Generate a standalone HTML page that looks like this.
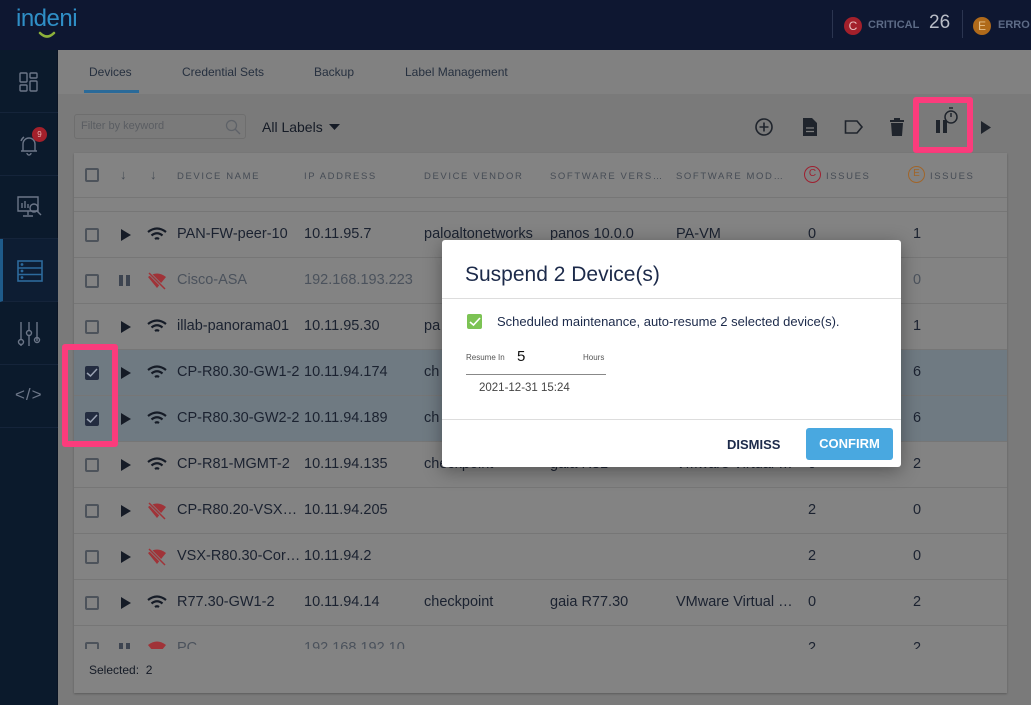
<!DOCTYPE html>
<html><head><meta charset="utf-8"><style>
*{box-sizing:border-box;margin:0;padding:0}
body{width:1031px;height:705px;overflow:hidden;position:relative;background:#7a7a7a;font-family:"Liberation Sans",sans-serif;color:#1b2433}
.a{position:absolute}
.hdr{left:0;top:0;width:1031px;height:50px;background:#0e1731}
.side{left:0;top:50px;width:58px;height:655px;background:#0b1a2c;border-right:1px solid #0a1424}
.si{position:absolute;left:0;width:58px;height:63px;border-bottom:1px solid #15243a}
.tabs{left:58px;top:50px;width:973px;height:44px;background:#818181}
.tab{position:absolute;top:15px;font-size:12px;color:#26303f}
.panel{left:74px;top:153px;width:933px;height:540px;background:#838383;box-shadow:0 1px 2px rgba(0,0,0,.25)}
.th{position:absolute;top:18px;font-size:9.5px;letter-spacing:1.6px;color:#464c55}
.row{position:absolute;left:0;width:933px;height:46px;border-top:1px solid #767676}
.c{position:absolute;top:14px;font-size:14.5px;color:#1b2230;white-space:nowrap}
.cb{position:absolute;left:11px;top:16px;width:14px;height:14px;border:2px solid #4d535b;border-radius:2px}
.cb.on{background:#232c40;border-color:#232c40}
.pink{border:6px solid #fb3c7c;border-radius:3px}
.dlg{left:442px;top:240px;width:459px;height:227px;background:#fff;border-radius:3px;box-shadow:0 4px 18px rgba(0,0,0,.35)}
</style></head><body>
<div class="a hdr">
 <div class="a" style="left:16px;top:5px;font-size:24px;color:#2f8fc6;letter-spacing:-0.5px">indeni</div>
 <svg class="a" style="left:38px;top:31px" width="18" height="8"><path d="M2 2 Q9 9 16 2" stroke="#8db13a" stroke-width="2.5" fill="none" stroke-linecap="round"/></svg>
 <div class="a" style="left:832px;top:10px;width:1px;height:28px;background:#2b3550"></div>
 <div class="a" style="left:844px;top:17px;width:18px;height:18px;border-radius:50%;background:#a3202b;color:#e8c0c0;font-size:12px;text-align:center;line-height:18px">C</div>
 <div class="a" style="left:868px;top:19px;font-size:11px;font-weight:bold;color:#5d6b86">CRITICAL</div>
 <div class="a" style="left:929px;top:12px;font-size:19px;color:#b8bcc6">26</div>
 <div class="a" style="left:962px;top:10px;width:1px;height:28px;background:#2b3550"></div>
 <div class="a" style="left:973px;top:17px;width:18px;height:18px;border-radius:50%;background:#b06a1a;color:#e6c08a;font-size:12px;text-align:center;line-height:18px">E</div>
 <div class="a" style="left:998px;top:19px;font-size:11px;font-weight:bold;color:#5d6b86">ERRO</div>
</div>
<div class="a side">
 <div class="si" style="top:0"><svg class="a" style="left:19px;top:22px" width="20" height="20" fill="none" stroke="#6c7688" stroke-width="1.4"><rect x="1" y="1" width="7" height="9" rx="1"/><rect x="1" y="13" width="7" height="6" rx="1"/><rect x="11" y="1" width="7" height="5" rx="1"/><rect x="11" y="9" width="7" height="10" rx="1"/></svg></div>
 <div class="si" style="top:63px"><svg class="a" style="left:18px;top:20px" width="24" height="24" fill="none" stroke="#6c7688" stroke-width="1.4"><path d="M5 18 V11 a6 6 0 0 1 12 0 V18 H3 H19 M9 20 a2 2 0 0 0 4 0 M3 8 a8 8 0 0 1 3-4"/></svg><div class="a" style="left:32px;top:14px;width:15px;height:15px;border-radius:50%;background:#a3202b;color:#e8b0b0;font-size:8px;text-align:center;line-height:15px">9</div></div>
 <div class="si" style="top:126px"><svg class="a" style="left:16px;top:18px" width="28" height="26" fill="none" stroke="#6c7688" stroke-width="1.4"><path d="M2 3 H22 V17 H2 Z M12 17 V21 M7 22 H17 M6 14 V9 M9 14 V7 M12 14 V10"/><circle cx="18" cy="14" r="4"/><path d="M21 17 L25 21"/></svg></div>
 <div class="si" style="top:189px;background:#0d1d33;border-left:3px solid #1e5b8a"><svg class="a" style="left:14px;top:21px" width="26" height="22" fill="none" stroke="#2c6a9c" stroke-width="1.6"><rect x="1" y="1" width="24" height="20"/><path d="M1 8 H25 M1 14.5 H25"/><circle cx="5" cy="4.5" r=".6" fill="#2c6a9c"/><circle cx="5" cy="11" r=".6" fill="#2c6a9c"/><circle cx="5" cy="17.5" r=".6" fill="#2c6a9c"/></svg></div>
 <div class="si" style="top:252px"><svg class="a" style="left:17px;top:18px" width="24" height="28" fill="none" stroke="#6c7688" stroke-width="1.4"><path d="M4 2 V19 M12 2 V10 M20 2 V21 M12 16 V26 M4 25 V26"/><circle cx="4" cy="22" r="2.5"/><circle cx="12" cy="13" r="2.5"/><circle cx="20" cy="20" r="2.5" transform="translate(0,0)"/></svg></div>
 <div class="si" style="top:315px"><div class="a" style="left:15px;top:20px;font-size:17px;color:#6c7688;letter-spacing:1px">&lt;/&gt;</div></div>
</div>
<div class="a tabs">
 <div class="tab" style="left:31px">Devices</div>
 <div class="a" style="left:26px;top:40px;width:55px;height:3px;background:#2a6a99"></div>
 <div class="tab" style="left:124px">Credential Sets</div>
 <div class="tab" style="left:256px">Backup</div>
 <div class="tab" style="left:347px">Label Management</div>
</div>
<div class="a" style="left:74px;top:114px;width:172px;height:25px;border:1px solid #6e6e6e;border-radius:3px">
 <div class="a" style="left:6px;top:5px;font-size:11px;color:#5a5d62">Filter by keyword</div>
 <svg class="a" style="left:150px;top:4px" width="16" height="16" fill="none" stroke="#5e6268" stroke-width="1.3"><circle cx="6.5" cy="6.5" r="5"/><path d="M10 10 L15 15"/></svg>
</div>
<div class="a" style="left:262px;top:119px;font-size:14px;color:#151b26">All Labels</div>
<svg class="a" style="left:329px;top:124px" width="12" height="7"><path d="M0 0 H11 L5.5 6 Z" fill="#151b26"/></svg>
<svg class="a" style="left:754px;top:117px" width="20" height="20" fill="none" stroke="#1f242c" stroke-width="1.6"><circle cx="10" cy="10" r="8"/><path d="M10 5.5 V14.5 M5.5 10 H14.5"/></svg>
<svg class="a" style="left:802px;top:117px" width="16" height="20"><path d="M1 1 H10 L15 6 V19 H1 Z" fill="#1f242c"/><path d="M4 11 H12 M4 14.5 H12" stroke="#7f7f7f" stroke-width="1.3"/></svg>
<svg class="a" style="left:844px;top:119px" width="20" height="16" fill="none" stroke="#1f242c" stroke-width="1.6"><path d="M1.5 2 H13 L18 8 L13 14 H1.5 Z"/></svg>
<svg class="a" style="left:889px;top:117px" width="16" height="20"><path d="M1 3 H15 V5 H1 Z M5 1 H11 V3 H5 Z M2 6 H14 L13 19 H3 Z" fill="#1f242c"/></svg>
<div class="a pink" style="left:913px;top:97px;width:60px;height:56px"></div>
<div class="a" style="left:936px;top:120px;width:4px;height:13px;background:#1f242c"></div>
<div class="a" style="left:943px;top:120px;width:4px;height:13px;background:#1f242c"></div>
<svg class="a" style="left:942px;top:106px" width="18" height="20" fill="none" stroke="#1f242c" stroke-width="1.5"><circle cx="9" cy="11" r="6"/><path d="M7 2 H11 M9 11 V7"/></svg>
<svg class="a" style="left:981px;top:121px" width="10" height="13"><path d="M0 0 L10 6.5 L0 13 Z" fill="#1f242c"/></svg>

<div class="a panel">
 <div class="cb" style="left:11px;top:15px"></div>
 <div class="th" style="left:46px;top:14px;font-size:13px;letter-spacing:0">↓</div>
 <div class="th" style="left:76px;top:14px;font-size:13px;letter-spacing:0">↓</div>
 <div class="th" style="left:103px">DEVICE NAME</div>
 <div class="th" style="left:230px">IP ADDRESS</div>
 <div class="th" style="left:350px">DEVICE VENDOR</div>
 <div class="th" style="left:476px">SOFTWARE VERS…</div>
 <div class="th" style="left:602px">SOFTWARE MOD…</div>
 <div class="a" style="left:730px;top:13px;width:17px;height:17px;border:1.5px solid #9e2030;border-radius:50%;color:#9e2030;font-size:10px;text-align:center;line-height:14px">C</div>
 <div class="th" style="left:752px">ISSUES</div>
 <div class="a" style="left:834px;top:13px;width:17px;height:17px;border:1.5px solid #a0652a;border-radius:50%;color:#a0652a;font-size:10px;text-align:center;line-height:14px">E</div>
 <div class="th" style="left:856px">ISSUES</div>
 <div class="a" style="left:0;top:44px;width:933px;height:14px;border-top:1px solid #767676"></div>
</div>
<div id="rows" class="a" style="left:74px;top:211px;width:933px;height:438px;overflow:hidden">
 <div class="row" style="top:0"><div class="cb"></div><svg class="a" style="left:47px;top:17px" width="10" height="12"><path d="M0 0 L10 6 L0 12 Z" fill="#151b26"/></svg><svg class="a" style="left:73px;top:15px" width="20" height="15" fill="none" stroke="#151b26" stroke-width="2.2"><path d="M1 5 Q10 -2 19 5 M4.5 8.5 Q10 4 15.5 8.5 M8 12 Q10 10.5 12 12"/></svg><div class="c" style="left:103px">PAN-FW-peer-10</div><div class="c" style="left:230px">10.11.95.7</div><div class="c" style="left:350px">paloaltonetworks</div><div class="c" style="left:476px">panos 10.0.0</div><div class="c" style="left:602px">PA-VM</div><div class="c" style="left:734px">0</div><div class="c" style="left:839px">1</div></div>
 <div class="row" style="top:46px"><div class="cb"></div><div class="a" style="left:45px;top:17px;width:4px;height:11px;background:#3d4450"></div><div class="a" style="left:52px;top:17px;width:4px;height:11px;background:#3d4450"></div><svg class="a" style="left:73px;top:14px" width="20" height="18"><path d="M1 5 Q10 -2 19 5 L10 16 Z" fill="#a03338"/><path d="M2 1 L18 17" stroke="#838383" stroke-width="3"/><path d="M2 1 L18 17" stroke="#a03338" stroke-width="1.5"/></svg><div class="c" style="left:103px;color:#4b525c">Cisco-ASA</div><div class="c" style="left:230px;color:#4b525c">192.168.193.223</div><div class="c" style="left:839px;color:#4b525c">0</div></div>
 <div class="row" style="top:92px"><div class="cb"></div><svg class="a" style="left:47px;top:17px" width="10" height="12"><path d="M0 0 L10 6 L0 12 Z" fill="#151b26"/></svg><svg class="a" style="left:73px;top:15px" width="20" height="15" fill="none" stroke="#151b26" stroke-width="2.2"><path d="M1 5 Q10 -2 19 5 M4.5 8.5 Q10 4 15.5 8.5 M8 12 Q10 10.5 12 12"/></svg><div class="c" style="left:103px">illab-panorama01</div><div class="c" style="left:230px">10.11.95.30</div><div class="c" style="left:350px">pa</div><div class="c" style="left:839px">1</div></div>
 <div class="row" style="top:138px;background:#6f7a82"><div class="cb on"></div><svg class="a" style="left:12px;top:18px" width="12" height="10" fill="none" stroke="#9aa3b3" stroke-width="1.5"><path d="M1 5 L4.5 8 L11 1"/></svg><svg class="a" style="left:47px;top:17px" width="10" height="12"><path d="M0 0 L10 6 L0 12 Z" fill="#151b26"/></svg><svg class="a" style="left:73px;top:15px" width="20" height="15" fill="none" stroke="#151b26" stroke-width="2.2"><path d="M1 5 Q10 -2 19 5 M4.5 8.5 Q10 4 15.5 8.5 M8 12 Q10 10.5 12 12"/></svg><div class="c" style="left:103px">CP-R80.30-GW1-2</div><div class="c" style="left:230px">10.11.94.174</div><div class="c" style="left:350px">ch</div><div class="c" style="left:839px">6</div></div>
 <div class="row" style="top:184px;background:#6f7a82"><div class="cb on"></div><svg class="a" style="left:12px;top:18px" width="12" height="10" fill="none" stroke="#9aa3b3" stroke-width="1.5"><path d="M1 5 L4.5 8 L11 1"/></svg><svg class="a" style="left:47px;top:17px" width="10" height="12"><path d="M0 0 L10 6 L0 12 Z" fill="#151b26"/></svg><svg class="a" style="left:73px;top:15px" width="20" height="15" fill="none" stroke="#151b26" stroke-width="2.2"><path d="M1 5 Q10 -2 19 5 M4.5 8.5 Q10 4 15.5 8.5 M8 12 Q10 10.5 12 12"/></svg><div class="c" style="left:103px">CP-R80.30-GW2-2</div><div class="c" style="left:230px">10.11.94.189</div><div class="c" style="left:350px">ch</div><div class="c" style="left:839px">6</div></div>
 <div class="row" style="top:230px"><div class="cb"></div><svg class="a" style="left:47px;top:17px" width="10" height="12"><path d="M0 0 L10 6 L0 12 Z" fill="#151b26"/></svg><svg class="a" style="left:73px;top:15px" width="20" height="15" fill="none" stroke="#151b26" stroke-width="2.2"><path d="M1 5 Q10 -2 19 5 M4.5 8.5 Q10 4 15.5 8.5 M8 12 Q10 10.5 12 12"/></svg><div class="c" style="left:103px">CP-R81-MGMT-2</div><div class="c" style="left:230px">10.11.94.135</div><div class="c" style="left:350px">checkpoint</div><div class="c" style="left:476px">gaia R81</div><div class="c" style="left:602px">VMware Virtual …</div><div class="c" style="left:734px">0</div><div class="c" style="left:839px">2</div></div>
 <div class="row" style="top:276px"><div class="cb"></div><svg class="a" style="left:47px;top:17px" width="10" height="12"><path d="M0 0 L10 6 L0 12 Z" fill="#151b26"/></svg><svg class="a" style="left:73px;top:14px" width="20" height="18"><path d="M1 5 Q10 -2 19 5 L10 16 Z" fill="#a03338"/><path d="M2 1 L18 17" stroke="#838383" stroke-width="3"/><path d="M2 1 L18 17" stroke="#a03338" stroke-width="1.5"/></svg><div class="c" style="left:103px">CP-R80.20-VSX…</div><div class="c" style="left:230px">10.11.94.205</div><div class="c" style="left:734px">2</div><div class="c" style="left:839px">0</div></div>
 <div class="row" style="top:322px"><div class="cb"></div><svg class="a" style="left:47px;top:17px" width="10" height="12"><path d="M0 0 L10 6 L0 12 Z" fill="#151b26"/></svg><svg class="a" style="left:73px;top:14px" width="20" height="18"><path d="M1 5 Q10 -2 19 5 L10 16 Z" fill="#a03338"/><path d="M2 1 L18 17" stroke="#838383" stroke-width="3"/><path d="M2 1 L18 17" stroke="#a03338" stroke-width="1.5"/></svg><div class="c" style="left:103px">VSX-R80.30-Cor…</div><div class="c" style="left:230px">10.11.94.2</div><div class="c" style="left:734px">2</div><div class="c" style="left:839px">0</div></div>
 <div class="row" style="top:368px"><div class="cb"></div><svg class="a" style="left:47px;top:17px" width="10" height="12"><path d="M0 0 L10 6 L0 12 Z" fill="#151b26"/></svg><svg class="a" style="left:73px;top:15px" width="20" height="15" fill="none" stroke="#151b26" stroke-width="2.2"><path d="M1 5 Q10 -2 19 5 M4.5 8.5 Q10 4 15.5 8.5 M8 12 Q10 10.5 12 12"/></svg><div class="c" style="left:103px">R77.30-GW1-2</div><div class="c" style="left:230px">10.11.94.14</div><div class="c" style="left:350px">checkpoint</div><div class="c" style="left:476px">gaia R77.30</div><div class="c" style="left:602px">VMware Virtual …</div><div class="c" style="left:734px">0</div><div class="c" style="left:839px">2</div></div>
 <div class="row" style="top:414px"><div class="cb"></div><div class="a" style="left:45px;top:17px;width:4px;height:11px;background:#3d4450"></div><div class="a" style="left:52px;top:17px;width:4px;height:11px;background:#3d4450"></div><svg class="a" style="left:73px;top:14px" width="20" height="18"><path d="M1 5 Q10 -2 19 5 L10 16 Z" fill="#a03338"/></svg><div class="c" style="left:103px;color:#4b525c">PC</div><div class="c" style="left:230px;color:#4b525c">192.168.192.10</div><div class="c" style="left:734px">2</div><div class="c" style="left:839px">2</div></div>
</div>
<div class="a" style="left:89px;top:663px;font-size:12px;color:#151b26">Selected:&nbsp; 2</div>
<div class="a pink" style="left:62px;top:344px;width:56px;height:103px"></div>

<div class="a dlg">
 <div class="a" style="left:23px;top:23px;font-size:21px;color:#1c2a4a">Suspend 2 Device(s)</div>
 <div class="a" style="left:0;top:58px;width:459px;height:1px;background:#ddd"></div>
 <div class="a" style="left:25px;top:74px;width:15px;height:15px;background:#7cc354;border-radius:2px"></div>
 <svg class="a" style="left:27px;top:77px" width="12" height="10" fill="none" stroke="#fff" stroke-width="1.6"><path d="M1 5 L4.5 8 L11 1"/></svg>
 <div class="a" style="left:55px;top:74px;font-size:13px;color:#1c2a4a">Scheduled maintenance, auto-resume 2 selected device(s).</div>
 <div class="a" style="left:24px;top:113px;font-size:8px;color:#555">Resume In</div>
 <div class="a" style="left:75px;top:108px;font-size:15px;color:#111">5</div>
 <div class="a" style="left:141px;top:113px;font-size:8px;color:#555">Hours</div>
 <div class="a" style="left:24px;top:134px;width:140px;height:1px;background:#888"></div>
 <div class="a" style="left:37px;top:142px;font-size:11.5px;color:#444">2021-12-31 15:24</div>
 <div class="a" style="left:0;top:179px;width:459px;height:1px;background:#ddd"></div>
 <div class="a" style="left:285px;top:197px;font-size:13px;font-weight:bold;color:#1c2a4a">DISMISS</div>
 <div class="a" style="left:364px;top:188px;width:87px;height:32px;background:#49a8e0;border-radius:3px;color:#fff;font-size:13px;font-weight:bold;text-align:center;line-height:32px">CONFIRM</div>
</div>
</body></html>
